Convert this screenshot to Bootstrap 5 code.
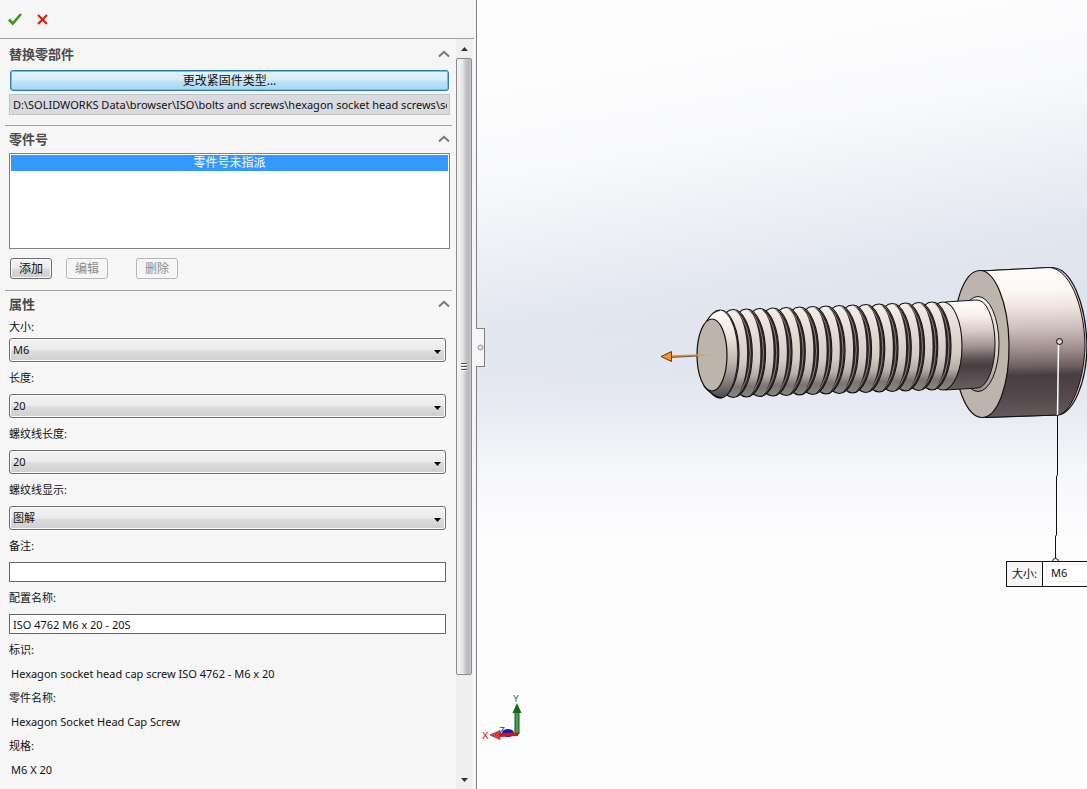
<!DOCTYPE html>
<html lang="zh-CN">
<head>
<meta charset="utf-8">
<meta name="viewport" content="width=device-width, initial-scale=1">
<title>替换零部件</title>
<link href="https://cdn.jsdelivr.net/npm/bootstrap@5.3.0/dist/css/bootstrap.min.css" rel="stylesheet">
<style>
  body { font-family: "Noto Sans", "Noto Sans CJK SC", sans-serif; font-size: 11px; color: #111; background: #fdfdfe; }
  .pm-panel { flex: 0 0 477px; min-width: 0; background: #f6f6f6; border-right: 1px solid #808080; }
  .pm-top { height: 39px; border-bottom: 1px solid #a0a0a0; padding-left: 8px; margin-right: 2px; gap: 14px; }
  .pm-top button, .pm-head button { border: 0; background: none; padding: 0; display: flex; }
  .pm-body { min-width: 0; padding: 2px 4px 0 5px; }
  .pm-group { padding: 0 2px 0 4px; }
  .pm-group + .pm-group { border-top: 1px solid #a0a0a0; }
  .pm-head { height: 26px; }
  .pm-head h2 { font-size: 13px; line-height: 26px; font-weight: 700; color: #4a4a4a; margin: 0; }
  .pm-change { height: 21px; margin: 3px 1px; padding: 0; font-size: 12px; line-height: 17px; color: #111; border: 1px solid #2c7fa8; border-radius: 3px; box-shadow: inset 0 0 0 1px #48d0f7; background: linear-gradient(#e4f4fc 0, #d5eefb 45%, #bfe2f7 55%, #a9d6f2 100%); }
  .pm-path { display: block; width: 100%; height: 21px; margin-bottom: 10px; padding: 0 2px 0 3px; border: 1px solid #c4c4c8; outline: 0; background: #d9dae0; color: #111; }
  .pm-list { height: 96px; border: 1px solid #828282; border-radius: 0; background: #fff; padding: 1px; margin-bottom: 9px; margin-top: 1px; }
  .pm-list .list-group-item { font-size: 12px; line-height: 16px; padding: 0; border: 0; background: #3399ff; color: #fff; text-align: center; }
  .pm-small { width: 42px; height: 21px; padding: 0; font-size: 12px; line-height: 18px; border: 1px solid #6c6c6c; border-radius: 3px; color: #111; background: linear-gradient(#f4f4f4 0, #ebebeb 48%, #dadada 52%, #cfcfcf 100%); box-shadow: inset 0 0 0 1px #fafafa; }
  .pm-small:disabled { border-color: #b4b4b4; color: #8c8c8c; background: #f5f5f5; opacity: 1; }
  .pm-actions { padding-left: 1px; margin-bottom: 11px; }
  .pm-edit { margin: 0 28px 0 14px; }
  .pm-field { padding-bottom: 4px; margin-right: 4px; }
  .pm-field label, .pm-field dt, .pm-field dd { display: block; line-height: 24px; margin: 0; font-weight: 400; }
  .pm-field dd { padding-left: 2px; }
  .pm-field label { margin-bottom: 4px; }
  .pm-first label { line-height: 20px; margin-bottom: 1px; }
  .pm-field select { display: block; width: 100%; height: 24px; padding: 0 3px; line-height: 20px; color: #111; appearance: none; border: 1px solid #6f6f6f; border-radius: 3px; box-shadow: inset 0 0 0 1px #fafafa;
    background: url("data:image/svg+xml,%3Csvg xmlns='http://www.w3.org/2000/svg' width='7' height='4'%3E%3Cpath d='M0 0h7L3.500 4z'/%3E%3C/svg%3E") no-repeat right 4px top 11px, linear-gradient(#f2f2f2 0, #ebebeb 50%, #dcdcdc 54%, #cfcfcf 100%); }
  .pm-field input { display: block; width: 100%; height: 20px; padding: 0 3px; border: 1px solid #666; border-radius: 0; background: #fff; color: #111; }
  .pm-scroll { flex: 0 0 16px; margin-right: 4px; background: #efefef; }
  .pm-scroll .pm-arrow { height: 19px; flex: none; }
  .pm-thumb { flex: 616 1 0; border: 1px solid #8a8a8a; border-radius: 2px; background: linear-gradient(90deg, #f6f6f6 0, #e6e6e6 40%, #c8c8cc 60%, #b6b6ba 85%, #d0d0d4 100%); }
  .pm-trough { flex: 95 1 0; }
  .pm-handle { position: absolute; left: 100%; top: 328px; width: 9px; height: 39px; border: 1px solid #808080; border-left: 0; background: #f6f6f6; padding: 0; z-index: 2; display: flex; align-items: center; justify-content: center; }
  .view-area { min-width: 0; overflow: hidden; background: linear-gradient(rgba(253,253,254,0) 320px, rgba(253,253,254,.08) 370px, rgba(253,253,254,.35) 420px, rgba(253,253,254,.8) 475px, #fdfdfe 545px), linear-gradient(170deg, #fdfdfe 80px, #f8f9fb 180px, #eceff5 260px, #e2e6ef 330px, #dfe3ed 410px, #dfe3ed 100%); }
  .view-art { position: absolute; left: 0; top: 0; }
  .view-triad { position: absolute; left: 0; top: 690px; }
  .view-tag { position: absolute; left: 529px; top: 561px; height: 26px; border: 1px solid #111; background: #fff; }
  .view-tag label { flex: none; width: 36px; border-right: 1px solid #111; background: #f6f6f6; text-align: center; line-height: 24px; }
  .view-tag input { flex: none; width: 60px; border: 1px solid #ececec; margin: 2px 2px 4px 3px; padding: 0 4px; background: #fff; color: #111; }
</style>
</head>
<body>
<div class="d-flex vh-100 overflow-hidden">
  <aside class="pm-panel d-flex flex-column position-relative">
    <div class="pm-top d-flex align-items-center">
      <button type="button" aria-label="确定"><svg width="14" height="14" viewBox="0 0 14 14"><path d="M1 7.500 L4.800 11.500 L13 2" fill="none" stroke="#3d9420" stroke-width="2.600"/></svg></button>
      <button type="button" aria-label="取消"><svg width="13" height="13" viewBox="0 0 13 13"><path d="M2 2 L11 11 M11 2 L2 11" fill="none" stroke="#cf2412" stroke-width="2.200"/></svg></button>
    </div>
    <div class="d-flex flex-grow-1 overflow-hidden">
      <form class="pm-body flex-grow-1">
        <section class="pm-group">
          <div class="pm-head d-flex justify-content-between align-items-center"><h2>替换零部件</h2><button type="button" aria-label="折叠"><svg width="12" height="8" viewBox="0 0 12 8"><path d="M1 6.500 L6 1.800 L11 6.500" fill="none" stroke="#777" stroke-width="2"/></svg></button></div>
          <div class="d-grid"><button type="button" class="btn pm-change">更改紧固件类型...</button></div>
          <input class="pm-path" readonly aria-label="路径" value="D:\SOLIDWORKS Data\browser\ISO\bolts and screws\hexagon socket head screws\socket head cap screw_iso.sldprt">
        </section>
        <section class="pm-group">
          <div class="pm-head d-flex justify-content-between align-items-center"><h2>零件号</h2><button type="button" aria-label="折叠"><svg width="12" height="8" viewBox="0 0 12 8"><path d="M1 6.500 L6 1.800 L11 6.500" fill="none" stroke="#777" stroke-width="2"/></svg></button></div>
          <div class="list-group pm-list"><button type="button" class="list-group-item">零件号未指派</button></div>
          <div class="pm-actions d-flex">
            <button type="button" class="btn pm-small">添加</button>
            <button type="button" class="btn pm-small pm-edit" disabled>编辑</button>
            <button type="button" class="btn pm-small" disabled>删除</button>
          </div>
        </section>
        <section class="pm-group">
          <div class="pm-head d-flex justify-content-between align-items-center"><h2>属性</h2><button type="button" aria-label="折叠"><svg width="12" height="8" viewBox="0 0 12 8"><path d="M1 6.500 L6 1.800 L11 6.500" fill="none" stroke="#777" stroke-width="2"/></svg></button></div>
          <div class="pm-field pm-first"><label for="f-size">大小:</label><select id="f-size"><option>M6</option></select></div>
          <div class="pm-field"><label for="f-len">长度:</label><select id="f-len"><option>20</option></select></div>
          <div class="pm-field"><label for="f-thr">螺纹线长度:</label><select id="f-thr"><option>20</option></select></div>
          <div class="pm-field"><label for="f-disp">螺纹线显示:</label><select id="f-disp"><option>图解</option></select></div>
          <div class="pm-field"><label for="f-note">备注:</label><input id="f-note" type="text"></div>
          <div class="pm-field"><label for="f-conf">配置名称:</label><input id="f-conf" type="text" value="ISO 4762 M6 x 20 - 20S"></div>
          <dl class="pm-field mb-0">
            <dt>标识:</dt><dd>Hexagon socket head cap screw ISO 4762 - M6 x 20</dd>
            <dt>零件名称:</dt><dd>Hexagon Socket Head Cap Screw</dd>
            <dt>规格:</dt><dd>M6 X 20</dd>
          </dl>
        </section>
      </form>
      <div class="pm-scroll d-flex flex-column" aria-hidden="true">
        <div class="pm-arrow d-flex justify-content-center align-items-center"><svg width="7" height="4"><path d="M0 4h7L3.500 0z" fill="#333"/></svg></div>
        <div class="pm-thumb d-flex justify-content-center align-items-center"><svg width="8" height="9"><path d="M1 1.500h6M1 4.500h6M1 7.500h6" stroke="#555" stroke-width="1"/><path d="M1 2.500h6M1 5.500h6M1 8.500h6" stroke="#fff" stroke-width="1"/></svg></div>
        <div class="pm-trough"></div>
        <div class="pm-arrow d-flex justify-content-center align-items-center"><svg width="7" height="4"><path d="M0 0h7L3.500 4z" fill="#333"/></svg></div>
      </div>
    </div>
    <button type="button" class="pm-handle" aria-label="收起面板"><svg width="7" height="7"><circle cx="3.500" cy="3.500" r="2.500" fill="#ddd" stroke="#999"/></svg></button>
  </aside>

  <main class="view-area flex-grow-1 position-relative">
    <svg class="view-art" width="610" height="789" viewBox="477 0 610 789" role="img" aria-label="内六角圆柱头螺钉">
      <defs>
        <linearGradient id="gHead" gradientUnits="userSpaceOnUse" x1="1030" y1="268" x2="1033" y2="417">
          <stop offset="0" stop-color="#fdfcfa"/><stop offset=".14" stop-color="#fdf9f5"/><stop offset=".27" stop-color="#efe2de"/><stop offset=".42" stop-color="#c9bab7"/><stop offset=".55" stop-color="#9d8d8c"/><stop offset=".66" stop-color="#6d5f62"/><stop offset=".72" stop-color="#483d42"/><stop offset=".85" stop-color="#53474b"/><stop offset="1" stop-color="#665a5c"/>
        </linearGradient>
        <linearGradient id="gShank" gradientUnits="userSpaceOnUse" x1="970" y1="300" x2="972" y2="389">
          <stop offset="0" stop-color="#fffefc"/><stop offset=".18" stop-color="#f8efeb"/><stop offset=".35" stop-color="#d8cac6"/><stop offset=".52" stop-color="#a39492"/><stop offset=".66" stop-color="#5f5255"/><stop offset=".74" stop-color="#483d42"/><stop offset="1" stop-color="#6a5e60"/>
        </linearGradient>
        <linearGradient id="gRing" x1="0" y1="0" x2="0" y2="1">
          <stop offset="0" stop-color="#f5efe8"/><stop offset=".3" stop-color="#e6dbd3"/><stop offset=".6" stop-color="#d3cbc4"/><stop offset=".76" stop-color="#b4aca6"/><stop offset=".88" stop-color="#7b7572"/><stop offset="1" stop-color="#8b8582"/>
        </linearGradient>
        <linearGradient id="gCone" x1="0" y1="0" x2="0" y2="1">
          <stop offset="0" stop-color="#fffdf8"/><stop offset=".3" stop-color="#eee4dd"/><stop offset=".6" stop-color="#bfb5b0"/><stop offset=".8" stop-color="#8a8381"/><stop offset="1" stop-color="#4e4a49"/>
        </linearGradient>
        <linearGradient id="gFillet" x1="0" y1="0" x2="0" y2="1">
          <stop offset="0" stop-color="#f4efe6"/><stop offset=".6" stop-color="#d9d0c8"/><stop offset="1" stop-color="#9a908b"/>
        </linearGradient>
        <linearGradient id="gArrow" x1="0" x2="1"><stop offset="0" stop-color="#f08c10"/><stop offset=".5" stop-color="#d99540"/><stop offset="1" stop-color="#bdb2a4"/></linearGradient>
        <g id="ring">
          <ellipse cx="720" cy="354" rx="19" ry="44" fill="url(#gRing)" stroke="#111" stroke-width="1.200"/>
          <path d="M722 311 A19 44 0 0 1 739 354 A19 44 0 0 1 722 397 A15 44 0 0 0 722 311Z" fill="#2a2325"/>
          <path d="M722 311 Q736.500 322 737 354 Q736.500 386 722 397" fill="none" stroke="#a39a95" stroke-width=".8"/>
        </g>
      </defs>
      <!-- head -->
      <path d="M981 271 L1052 267.500 C1072 268 1086 305 1087 345 C1087 383 1073 413 1058 415 L983 417.500Z" fill="#d9cdca" stroke="#111" stroke-width="1.200"/>
      <path d="M981 271 L1049 267.500 C1068 268 1084 302 1085 345 C1084 386 1069 414 1058 415 L983 417.500Z" fill="url(#gHead)" stroke="#111" stroke-width="1"/>
      <ellipse cx="981" cy="344" rx="28" ry="73.500" transform="rotate(-1 981 344)" fill="#bdb5ab" stroke="#111" stroke-width="1.200"/>
      <ellipse cx="978" cy="344" rx="21" ry="47.500" fill="url(#gFillet)" stroke="#111" stroke-width="1"/>
      <!-- plain shank -->
      <path d="M945 302 L976 300 A18 44 0 0 1 978 388 L945 390Z" fill="url(#gShank)" stroke="#111" stroke-width="1"/>
      <ellipse cx="943" cy="346" rx="19" ry="44" fill="url(#gRing)" stroke="#111" stroke-width="1.100"/>
      <!-- thread, far ring first -->
      <g id="thread"></g>
      <!-- chamfered end -->
      <path d="M703 325 C708 316 713 310.500 720 310.500 C730 312 737 331 737 354 C737 377 730 396 721 397.500 C713 396 706 389 703 385Z" fill="url(#gCone)"/>
      <path d="M706 322 Q713 310.500 720 310.500 M704 386 Q713 397 722 398" fill="none" stroke="#111" stroke-width="1.200"/>
      <ellipse cx="712" cy="355" rx="15" ry="36" fill="#bdb5ab" stroke="#111" stroke-width="1.200"/>
      <!-- direction arrow -->
      <path d="M671 355.300 L711 354 V355.400 L671 357.300Z" fill="url(#gArrow)"/>
      <path d="M671 357.500 L697 356" stroke="#5b3a10" stroke-width=".8"/>
      <path d="M661 356.500 L671.500 351.500 V361.500Z" fill="#f79a1c" stroke="#5b3a10" stroke-width="1"/>
      <!-- leader -->
      <path d="M1058.500 344 L1057.500 415" stroke="#fff" stroke-width="1.500"/>
      <path d="M1057.500 415 V475 L1056.500 476 V535 L1055.500 536 V558" fill="none" stroke="#111" stroke-width="1"/>
      <circle cx="1059.500" cy="341.500" r="3" fill="#c9bcb9" stroke="#111"/><path d="M1058 342h3" stroke="#fff"/>
      <circle cx="1055.500" cy="561.500" r="3" fill="#fff" stroke="#111"/>
    </svg>
    <svg class="view-triad" width="60" height="60" viewBox="477 690 60 60" aria-label="坐标轴">
      <ellipse cx="508" cy="733" rx="6" ry="4" fill="#1a1aa0"/>
      <text x="499" y="734" font-family="Liberation Mono, monospace" font-size="10" fill="#1d2fd0">Z</text>
      <path d="M515 734V712H519V734Z" fill="#4a9c50" stroke="#12581a" stroke-width="1"/>
      <path d="M517 703 L521.500 713 H512.500Z" fill="#126a1a"/>
      <path d="M499 733 L518 732.500 V736 L499 737Z" fill="#cc1618"/>
      <path d="M490 735 L500 730.500 V739.500Z" fill="#d14444" stroke="#a01818" stroke-width=".7"/>
      <text x="513" y="702" font-family="Liberation Mono, monospace" font-size="10" fill="#187020">Y</text>
      <text x="482" y="739" font-family="Liberation Mono, monospace" font-size="11" fill="#c01818">X</text>
    </svg>
    <div class="view-tag d-flex"><label for="v-size">大小:</label><input id="v-size" type="text" value="M6"></div>
  </main>
</div>
<script src="https://cdn.jsdelivr.net/npm/bootstrap@5.3.0/dist/js/bootstrap.bundle.min.js"></script>
<script>
  const thread = document.getElementById('thread');
  for (let i = 16; i >= 0; i--) {
    const u = document.createElementNS('http://www.w3.org/2000/svg', 'use');
    u.setAttribute('href', '#ring');
    u.setAttribute('x', i * 13.25);
    u.setAttribute('y', -i * 0.5);
    thread.appendChild(u);
  }
</script>
</body>
</html>
